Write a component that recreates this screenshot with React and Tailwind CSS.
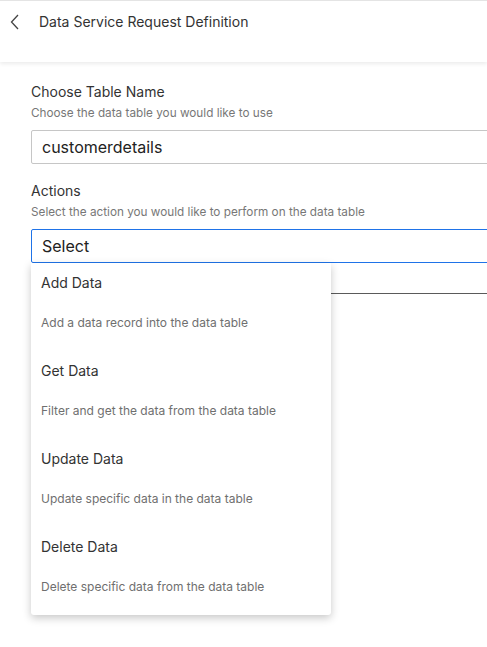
import React from 'react';

const actions = [
  { title: 'Add Data', desc: 'Add a data record into the data table' },
  { title: 'Get Data', desc: 'Filter and get the data from the data table' },
  { title: 'Update Data', desc: 'Update specific data in the data table' },
  { title: 'Delete Data', desc: 'Delete specific data from the data table' },
];

const App = () => {
  return (
    <div className="w-[487px] h-[647px] overflow-hidden bg-white font-['Inter',sans-serif]">
      {/* header */}
      <div className="h-[62px] border-t border-[#e4e4e4] bg-white shadow-[0_2px_4px_rgba(0,0,0,0.08)] relative z-10">
        <div className="h-[41px] flex items-center pl-[10px]">
          <svg width="10" height="16" viewBox="0 0 10 16" fill="none" className="mr-[19px]">
            <path d="M8 1L1.5 8L8 15" stroke="#444" strokeWidth="1.3" />
          </svg>
          <span className="text-[14px] text-[#333]">Data Service Request Definition</span>
        </div>
      </div>

      {/* form */}
      <div className="pl-[31px] pt-[20px]">
        <div className="text-[14px] leading-[20px] text-[#333]">Choose Table Name</div>
        <div className="mt-[3px] text-[11.75px] leading-[16px] text-[#777]">Choose the data table you would like to use</div>
        <div className="mt-[9px] w-[500px] h-[34px] border border-[#c6c6c6] rounded-[2px] flex items-center pl-[10px] text-[16px] text-[#222]">
          customerdetails
        </div>

        <div className="mt-[17px] text-[14px] leading-[20px] text-[#333]">Actions</div>
        <div className="mt-[3px] text-[11.75px] leading-[16px] text-[#777]">Select the action you would like to perform on the data table</div>
        <div className="relative mt-[9px]">
          <div className="w-[500px] h-[34px] border border-[#1f73e8] rounded-[2px] flex items-center pl-[10px] text-[16px] text-[#222]">
            Select
          </div>
          <div className="w-[500px] h-[31px] border-b border-[#5a5a5a]"></div>

          {/* dropdown menu */}
          <div className="absolute left-0 top-[34px] w-[300px] bg-white rounded-b-[3px] shadow-[0_3px_8px_rgba(0,0,0,0.22)]">
            {actions.map((a) => (
              <div key={a.title} className="h-[88px] pl-[10px] pt-[10px]">
                <div className="text-[14px] leading-[20px] text-[#333]">{a.title}</div>
                <div className="mt-[21px] text-[12px] leading-[18px] text-[#6f6f6f]">{a.desc}</div>
              </div>
            ))}
          </div>
        </div>
      </div>
    </div>
  );
};

export default App;
